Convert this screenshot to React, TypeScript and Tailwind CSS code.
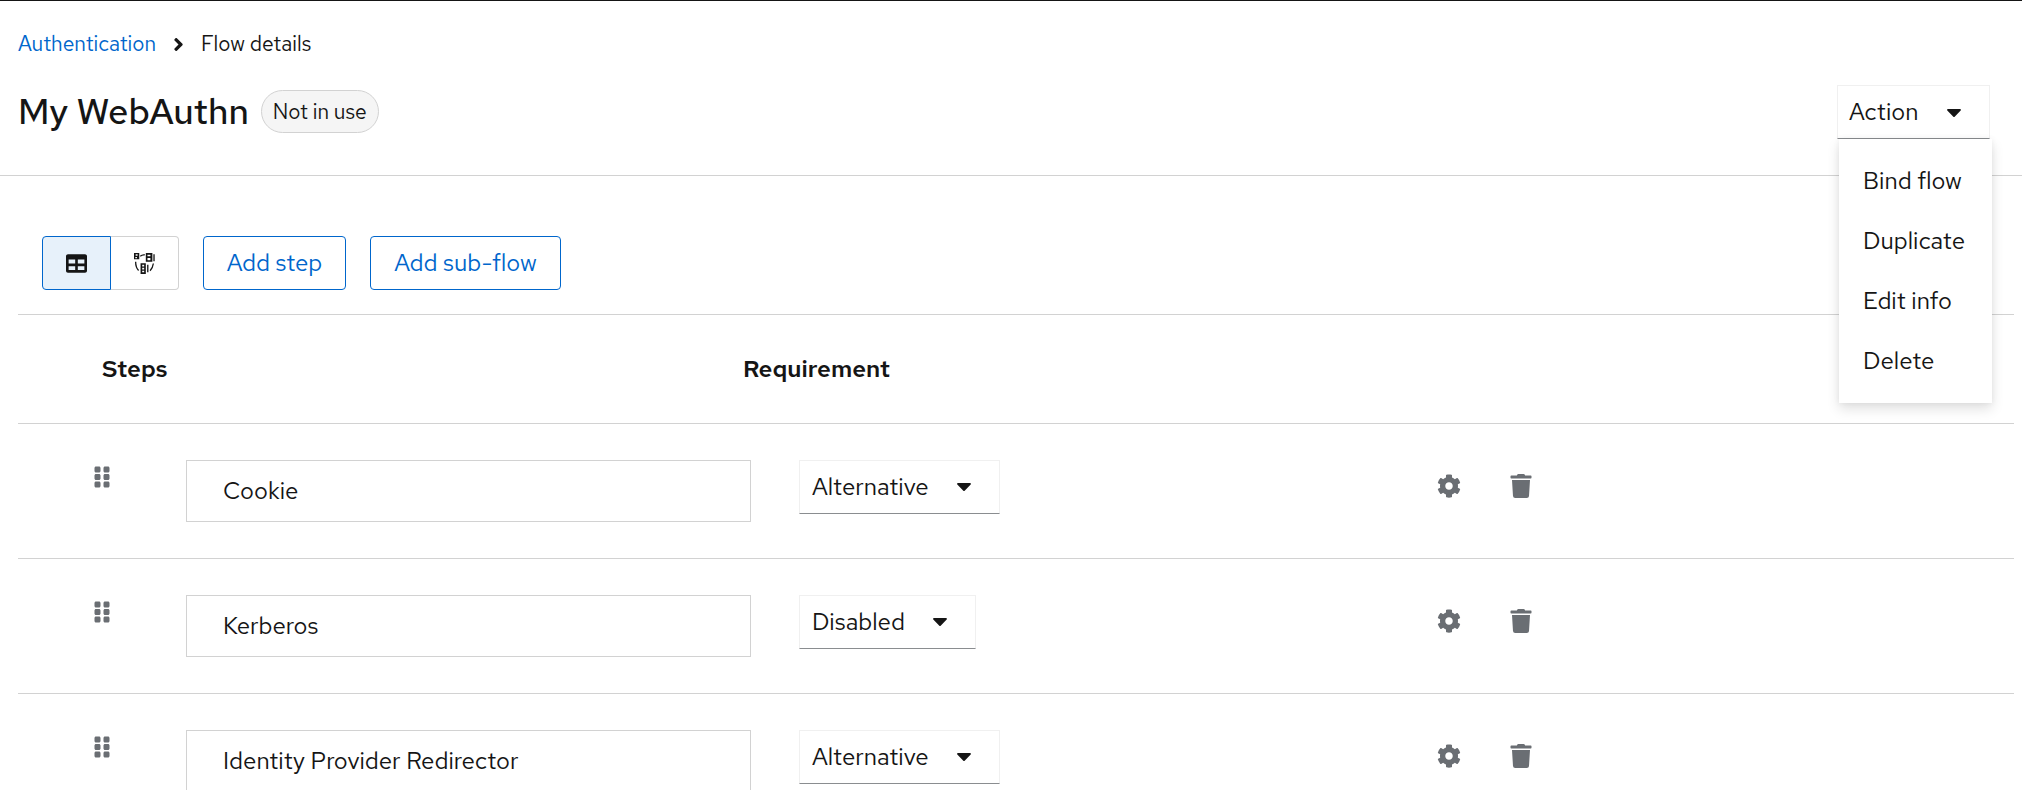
import { useState } from "react";
import { FaAngleRight, FaCaretDown, FaCog, FaGripVertical, FaTable, FaTrash } from "react-icons/fa";

const requirements = ["Required", "Alternative", "Disabled", "Conditional"];

const menuItems = ["Bind flow", "Duplicate", "Edit info", "Delete"];

const steps = [
  { name: "Cookie", requirement: "Alternative", width: "w-[201px]" },
  { name: "Kerberos", requirement: "Disabled", width: "w-[177px]" },
  { name: "Identity Provider Redirector", requirement: "Alternative", width: "w-[201px]" },
];

function DiagramIcon() {
  return (
    <svg aria-hidden="true" viewBox="0 0 64 64" className="size-[21px]" fill="currentColor">
      <path fillRule="evenodd" d="M0 0h16v19H0zM5 4v4h6V4zM4 12v4h5v-4z" />
      <path fillRule="evenodd" d="M36 0h20v27H36zM41 5v5h9V5zM41 15v7h9v-7z" />
      <path fillRule="evenodd" d="M20 31h16v33H20zM25 36v5h6v-5zM25 45v5h6v-5zM25 54v5h6v-5z" />
      <path d="M59 4h4v21h-4zM40 36h4v23h-4z" />
      <path d="M19 10q7-6 14-4M5 27q0 18 9 26M59 32q-2 14-10 22" fill="none" stroke="currentColor" strokeWidth="4" />
    </svg>
  );
}

function Header() {
  const [open, setOpen] = useState(true);

  return (
    <header className="border-b border-[#d2d2d2] pt-[27px] pr-8 pb-9 pl-[18px]">
      <nav aria-label="Breadcrumb">
        <ol className="flex items-center text-[21px] leading-8">
          <li>
            <a href="#authentication" className="text-[#0066cc]">
              Authentication
            </a>
          </li>
          <li className="flex items-center">
            <FaAngleRight aria-hidden="true" size={21} className="mx-3" />
            <span aria-current="page">Flow details</span>
          </li>
        </ol>
      </nav>
      <div className="mt-[25px] flex items-start justify-between">
        <div className="flex h-[52px] items-center gap-3">
          <h1 className="text-[36px] leading-[48px] font-medium">My WebAuthn</h1>
          <span className="rounded-full border border-[#d2d2d2] bg-[#f5f5f5] px-[11px] text-[21px] leading-[41px]">
            Not in use
          </span>
        </div>
        <div className="relative">
          <button
            type="button"
            aria-haspopup="menu"
            aria-expanded={open}
            onClick={() => setOpen(!open)}
            className="flex h-[54px] w-[153px] items-center justify-between border border-[#f0f0f0] border-b-[#8a8d90] pr-[23px] pl-[11px]"
          >
            Action
            <FaCaretDown aria-hidden="true" size={24} />
          </button>
          {open && (
            <ul
              role="menu"
              className="absolute top-full left-[2px] z-10 w-[153px] bg-white py-3 shadow-[0_6px_12px_rgba(3,3,3,0.12),0_0_6px_rgba(3,3,3,0.06)]"
            >
              {menuItems.map((item) => (
                <li key={item} role="none">
                  <button type="button" role="menuitem" className="h-[60px] w-full pl-6 text-left">
                    {item}
                  </button>
                </li>
              ))}
            </ul>
          )}
        </div>
      </div>
    </header>
  );
}

function Toolbar() {
  return (
    <div className="flex gap-6 pb-6 pl-6">
      <div className="flex">
        <button
          type="button"
          aria-label="Table view"
          aria-pressed="true"
          className="flex h-[54px] w-[69px] items-center justify-center rounded-l border border-[#0066cc] bg-[#e7f1fa]"
        >
          <FaTable size={21} />
        </button>
        <button
          type="button"
          aria-label="Diagram view"
          aria-pressed="false"
          className="flex h-[54px] w-[68px] items-center justify-center rounded-r border border-l-0 border-[#d2d2d2]"
        >
          <DiagramIcon />
        </button>
      </div>
      <button type="button" className="h-[54px] w-[143px] rounded border border-[#0066cc] text-[#0066cc]">
        Add step
      </button>
      <button type="button" className="h-[54px] w-[191px] rounded border border-[#0066cc] text-[#0066cc]">
        Add sub-flow
      </button>
    </div>
  );
}

function StepRow({ name, requirement, width }: (typeof steps)[number]) {
  return (
    <tr className="border-b border-[#d2d2d2] align-top">
      <td className="pt-[41px] pl-[72px]">
        <button type="button" aria-label={`Drag ${name}`} className="block text-[#6a6e73]">
          <FaGripVertical size={24} />
        </button>
      </td>
      <td colSpan={2} className="py-9">
        <input
          type="text"
          aria-label="Step name"
          defaultValue={name}
          className="block h-[62px] w-full border border-[#d2d2d2] pb-0.5 pl-9"
        />
      </td>
      <td className="py-9 pl-12">
        <div className="relative w-fit">
          <select
            aria-label={`Requirement for ${name}`}
            defaultValue={requirement}
            className={`block h-[54px] appearance-none border border-[#f0f0f0] border-b-[#8a8d90] pl-3 ${width}`}
          >
            {requirements.map((option) => (
              <option key={option}>{option}</option>
            ))}
          </select>
          <FaCaretDown aria-hidden="true" size={24} className="pointer-events-none absolute top-[14px] right-6" />
        </div>
      </td>
      <td className="pt-[50px]">
        <div className="flex gap-12 text-[#6a6e73]">
          <button type="button" aria-label={`Settings for ${name}`}>
            <FaCog size={24} />
          </button>
          <button type="button" aria-label={`Delete ${name}`}>
            <FaTrash size={24} />
          </button>
        </div>
      </td>
    </tr>
  );
}

export default function App() {
  return (
    <div className="min-h-screen overflow-hidden border-t border-[#151515] bg-white font-['Red_Hat_Text',Roboto,sans-serif] text-[24px] leading-9 text-[#151515]">
      <Header />
      <main className="pt-[60px] pr-2 pl-[18px]">
        <Toolbar />
        <table className="w-full table-fixed border-collapse border-t border-[#d2d2d2]">
          <colgroup>
            <col className="w-[168px]" />
            <col className="w-[27.9%]" />
            <col className="w-2" />
            <col className="w-[34.4%]" />
            <col />
          </colgroup>
          <thead>
            <tr className="h-[109px] border-b border-[#d2d2d2] text-left">
              <th scope="col" colSpan={2} className="pl-[84px] font-semibold">
                Steps
              </th>
              <th scope="col" colSpan={2} className="font-semibold">
                Requirement
              </th>
              <td />
            </tr>
          </thead>
          <tbody>
            {steps.map((step) => (
              <StepRow key={step.name} {...step} />
            ))}
          </tbody>
        </table>
      </main>
    </div>
  );
}
